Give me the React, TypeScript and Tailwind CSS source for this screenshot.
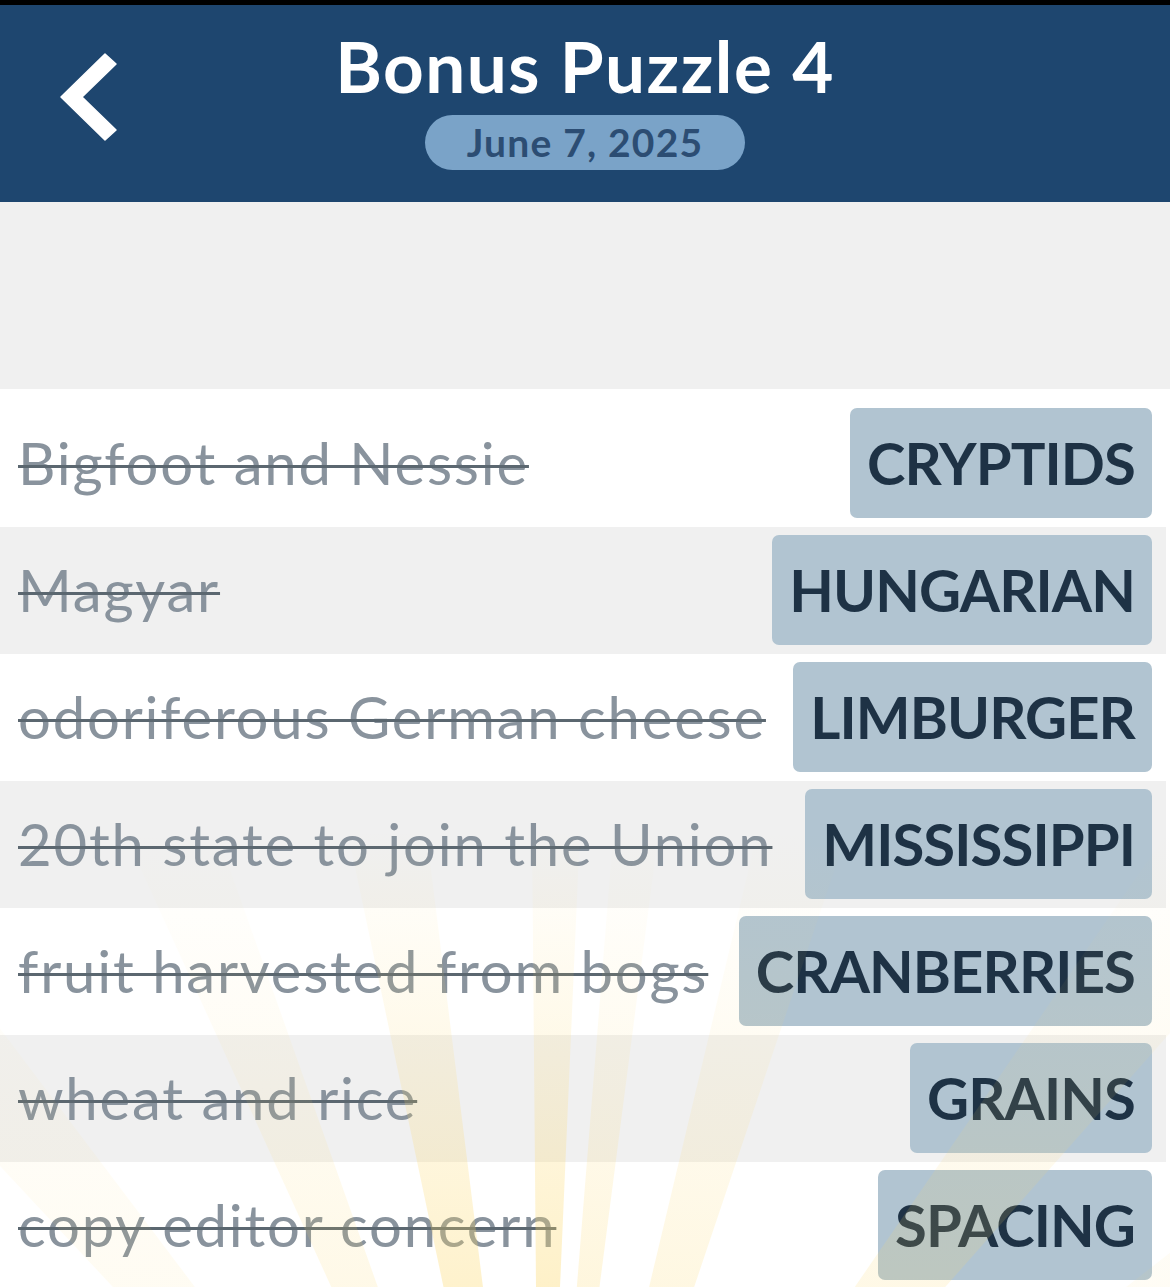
import React from "react";

const rows: [string, string][] = [
  ["Bigfoot and Nessie", "CRYPTIDS"],
  ["Magyar", "HUNGARIAN"],
  ["odoriferous German cheese", "LIMBURGER"],
  ["20th state to join the Union", "MISSISSIPPI"],
  ["fruit harvested from bogs", "CRANBERRIES"],
  ["wheat and rice", "GRAINS"],
  ["copy editor concern", "SPACING"],
];

const rays: [number, number, number][] = [
  [-40, 3, 0.15],
  [-22, 2.5, 0.28],
  [-9.5, 2.4, 0.6],
  [1, 1.5, 0.65],
  [6, 1.4, 0.4],
  [16, 2.6, 0.35],
  [38, 3.5, 0.3],
  [55, 3, 0.12],
];

function Rays() {
  const ox = 540;
  const oy = 1745;
  const R = 1400;
  const pt = (deg: number) => {
    const r = (deg * Math.PI) / 180;
    return `${ox + R * Math.sin(r)},${oy - R * Math.cos(r)}`;
  };
  return (
    <svg
      className="pointer-events-none absolute left-0 top-0"
      width="1170"
      height="1287"
      viewBox="0 0 1170 1287"
    >
      <defs>
        <linearGradient id="rayg" gradientUnits="userSpaceOnUse" x1="0" y1="1287" x2="0" y2="830">
          <stop offset="0" stopColor="#fcd766" stopOpacity="0.55" />
          <stop offset="0.5" stopColor="#fcd766" stopOpacity="0.25" />
          <stop offset="1" stopColor="#fcd766" stopOpacity="0" />
        </linearGradient>
      </defs>
      {rays.map(([a, w, o], i) => (
        <polygon
          key={i}
          points={`${ox},${oy} ${pt(a - w)} ${pt(a + w)}`}
          fill="url(#rayg)"
          opacity={o}
        />
      ))}
    </svg>
  );
}

export default function App() {
  return (
    <div
      className="relative h-[1287px] w-[1170px] overflow-hidden bg-white"
      style={{ fontFamily: "Lato, 'Open Sans', sans-serif" }}
    >
      <div className="h-[5px] bg-black" />
      <header className="grid h-[197px] grid-cols-[1fr_auto_1fr] bg-[#1e466f]">
        <div className="pl-[58px] pt-[46px]">
          <svg width="64" height="92" viewBox="58 50 64 92">
            <polygon
              points="105,53 116,63 82,96 116,129 105,139 61,96"
              fill="#ffffff"
              stroke="#ffffff"
              strokeWidth="1.5"
              strokeLinejoin="round"
            />
          </svg>
        </div>
        <div className="flex flex-col items-center pt-[25px]">
          <h1 className="text-[71px] font-bold leading-none tracking-[1.5px] text-white">Bonus Puzzle 4</h1>
          <div className="mt-[14px] flex h-[55px] items-center rounded-full bg-[#7aa3c8] px-[42px]">
            <span className="text-[39px] font-bold leading-none tracking-[1.2px] text-[#2c4d73]">June 7, 2025</span>
          </div>
        </div>
        <div />
      </header>
      <div className="h-[187px] bg-[#f0f0f0]" />
      <div className="bg-white pr-[4px]">
        {rows.map(([clue, answer], i) => (
          <div
            key={answer}
            className={`flex items-center justify-between pl-[18px] pr-[14px] pb-[9px] ${
              i === 0 ? "pt-[19px]" : "pt-[8px]"
            } ${i % 2 === 0 ? "bg-white" : "bg-[#f0f0f0]"}`}
          >
            <span className="whitespace-nowrap text-[58px] leading-none tracking-[1.8px] text-[#89939d] line-through decoration-[#5b6770] decoration-[3px]">
              {clue}
            </span>
            <div className="flex h-[110px] items-center rounded-[7px] bg-[#b1c4d1] px-[17px]">
              <span className="text-[58px] font-bold leading-none tracking-[-0.9px] text-[#1e3245]">{answer}</span>
            </div>
          </div>
        ))}
      </div>
      <Rays />
    </div>
  );
}
